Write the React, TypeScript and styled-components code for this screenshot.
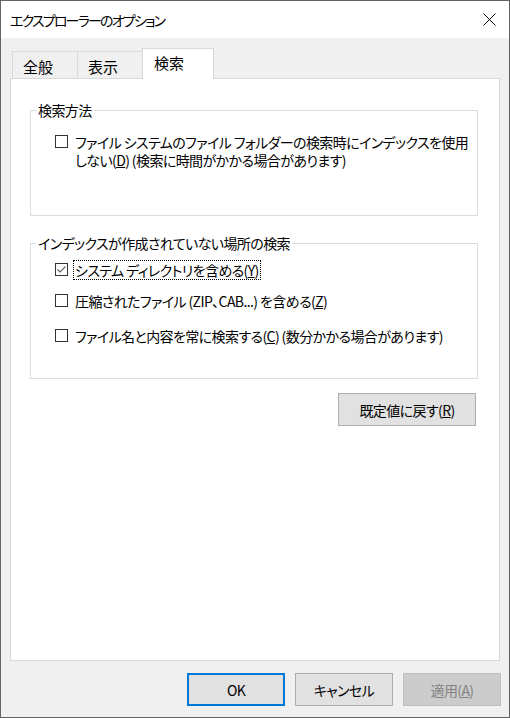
import React from "react";
import styled, { createGlobalStyle } from "styled-components";

const GlobalStyle = createGlobalStyle`
  html, body {
    margin: 0;
    padding: 0;
    background: #f0f0f0;
  }
  body {
    font-family: "Noto Sans CJK JP", "Noto Sans", sans-serif;
    font-size: 14px;
    letter-spacing: -0.6px;
    color: #000;
    font-feature-settings: "palt";
  }
  * {
    box-sizing: border-box;
  }
`;

const CheckBox = ({ checked = false }: { checked?: boolean }) => (
  <Box>
    {checked && (
      <svg width="11" height="11" viewBox="0 0 11 11">
        <path d="M1.5 5.5 L4 8 L9.5 2.5" fill="none" stroke="#666" strokeWidth="1.2" />
      </svg>
    )}
  </Box>
);

const Key = ({ k }: { k: string }) => (
  <>
    (<u>{k}</u>)
  </>
);

const App = () => {
  return (
    <>
      <GlobalStyle />
      <Window>
        <TitleBar>
          <Title>エクスプローラーのオプション</Title>
          <CloseButton>
            <svg width="13" height="13" viewBox="0 0 13 13">
              <path d="M0.5 0.5 L12.5 12.5 M12.5 0.5 L0.5 12.5" stroke="#000" strokeWidth="1" />
            </svg>
          </CloseButton>
        </TitleBar>

        <Body>
          <TabStrip>
            <Tab>全般</Tab>
            <Tab>表示</Tab>
            <Tab $active>検索</Tab>
          </TabStrip>

          <Panel>
            <Group>
              <Legend>検索方法</Legend>
              <GroupContent $top={13} $bottom={46}>
                <Row>
                  <CheckBox />
                  <Label>
                    ファイル システムのファイル フォルダーの検索時にインデックスを使用
                    <br />
                    しない<Key k="D" /> (検索に時間がかかる場合があります)
                  </Label>
                </Row>
              </GroupContent>
            </Group>

            <Group $gap={17}>
              <Legend>インデックスが作成されていない場所の検索</Legend>
              <GroupContent $top={8} $bottom={33}>
                <Row>
                  <CheckBox checked />
                  <Label $focused>
                    システム ディレクトリを含める<Key k="Y" />
                  </Label>
                </Row>
                <Row $gap={13}>
                  <CheckBox />
                  <Label>
                    圧縮されたファイル (ZIP、CAB...) を含める<Key k="Z" />
                  </Label>
                </Row>
                <Row $gap={17}>
                  <CheckBox />
                  <Label>
                    ファイル名と内容を常に検索する<Key k="C" /> (数分かかる場合があります)
                  </Label>
                </Row>
              </GroupContent>
            </Group>

            <ResetRow>
              <Button $width={138}>
                既定値に戻す<Key k="R" />
              </Button>
            </ResetRow>
          </Panel>
        </Body>

        <Footer>
          <Button $primary>OK</Button>
          <Button>キャンセル</Button>
          <Button $disabled>
            適用<Key k="A" />
          </Button>
        </Footer>
      </Window>
    </>
  );
};

export default App;

// ===== styles =====

const Window = styled.div`
  width: 510px;
  height: 718px;
  border: 1px solid #646464;
  background: #f0f0f0;
  display: flex;
  flex-direction: column;
`;

const TitleBar = styled.div`
  height: 37px;
  background: #fff;
  display: flex;
  align-items: center;
  justify-content: space-between;
  padding-left: 9px;
`;

const Title = styled.div`
  font-size: 14px;
  letter-spacing: -1.8px;
  line-height: 20px;
`;

const CloseButton = styled.div`
  width: 40px;
  height: 37px;
  display: flex;
  align-items: center;
  justify-content: center;
`;

const Body = styled.div`
  flex: 1;
  display: flex;
  flex-direction: column;
  padding: 10px 9px 0 9px;
`;

const TabStrip = styled.div`
  position: relative;
  z-index: 1;
  height: 31px;
  margin-bottom: -1px;
  padding-left: 2px;
  display: flex;
  align-items: flex-end;
`;

const Tab = styled.div<{ $active?: boolean }>`
  height: ${(p) => (p.$active ? "31px" : "27px")};
  margin-bottom: ${(p) => (p.$active ? "0" : "1px")};
  margin-left: -1px;
  &:first-child {
    margin-left: 0;
  }
  width: ${(p) => (p.$active ? "72px" : "66px")};
  padding: ${(p) => (p.$active ? "0 0 2px 11px" : "4px 0 0 10px")};
  border: 1px solid #d9d9d9;
  border-bottom: none;
  background: ${(p) => (p.$active ? "#fff" : "#f0f0f0")};
  display: flex;
  align-items: center;
  font-size: 15px;
  letter-spacing: 0;
  line-height: 20px;
`;

const Panel = styled.div`
  flex: 1;
  background: #fff;
  border: 1px solid #d9d9d9;
  padding: 21px 21px 0 19px;
  display: flex;
  flex-direction: column;
`;

const Group = styled.fieldset<{ $gap?: number }>`
  margin: ${(p) => p.$gap || 0}px 0 0 0;
  padding: 0;
  min-width: 0;
  border: 1px solid #dcdcdc;
`;

const Legend = styled.legend`
  margin-left: 5px;
  padding: 0 2px;
  line-height: 20px;
`;

const GroupContent = styled.div<{ $top: number; $bottom: number }>`
  padding: ${(p) => p.$top}px 0 ${(p) => p.$bottom}px 24px;
  display: flex;
  flex-direction: column;
`;

const Row = styled.div<{ $gap?: number }>`
  display: flex;
  align-items: flex-start;
  margin-top: ${(p) => p.$gap || 0}px;
  line-height: 18px;
`;

const Box = styled.span`
  flex: none;
  width: 13px;
  height: 13px;
  margin-top: 2px;
  margin-right: 6px;
  border: 1px solid #333;
  background: #fff;
  display: flex;
  align-items: center;
  justify-content: center;
`;

const Label = styled.span<{ $focused?: boolean }>`
  padding: 0 1px;
  outline: ${(p) => (p.$focused ? "1px dotted #000" : "none")};
  white-space: nowrap;
`;

const ResetRow = styled.div`
  display: flex;
  justify-content: flex-end;
  margin-top: 14px;
  padding-right: 2px;
`;

const Button = styled.div<{ $primary?: boolean; $disabled?: boolean; $width?: number }>`
  width: ${(p) => p.$width || 98}px;
  height: 33px;
  display: flex;
  align-items: center;
  justify-content: center;
  background: ${(p) => (p.$disabled ? "#cccccc" : "#e1e1e1")};
  color: ${(p) => (p.$disabled ? "#838383" : "#000")};
  border: ${(p) =>
    p.$primary ? "2px solid #0078d7" : p.$disabled ? "1px solid #bfbfbf" : "1px solid #adadad"};
  line-height: 20px;
`;

const Footer = styled.div`
  display: flex;
  justify-content: flex-end;
  gap: 10px;
  padding: 12px 8px 11px 0;
`;
